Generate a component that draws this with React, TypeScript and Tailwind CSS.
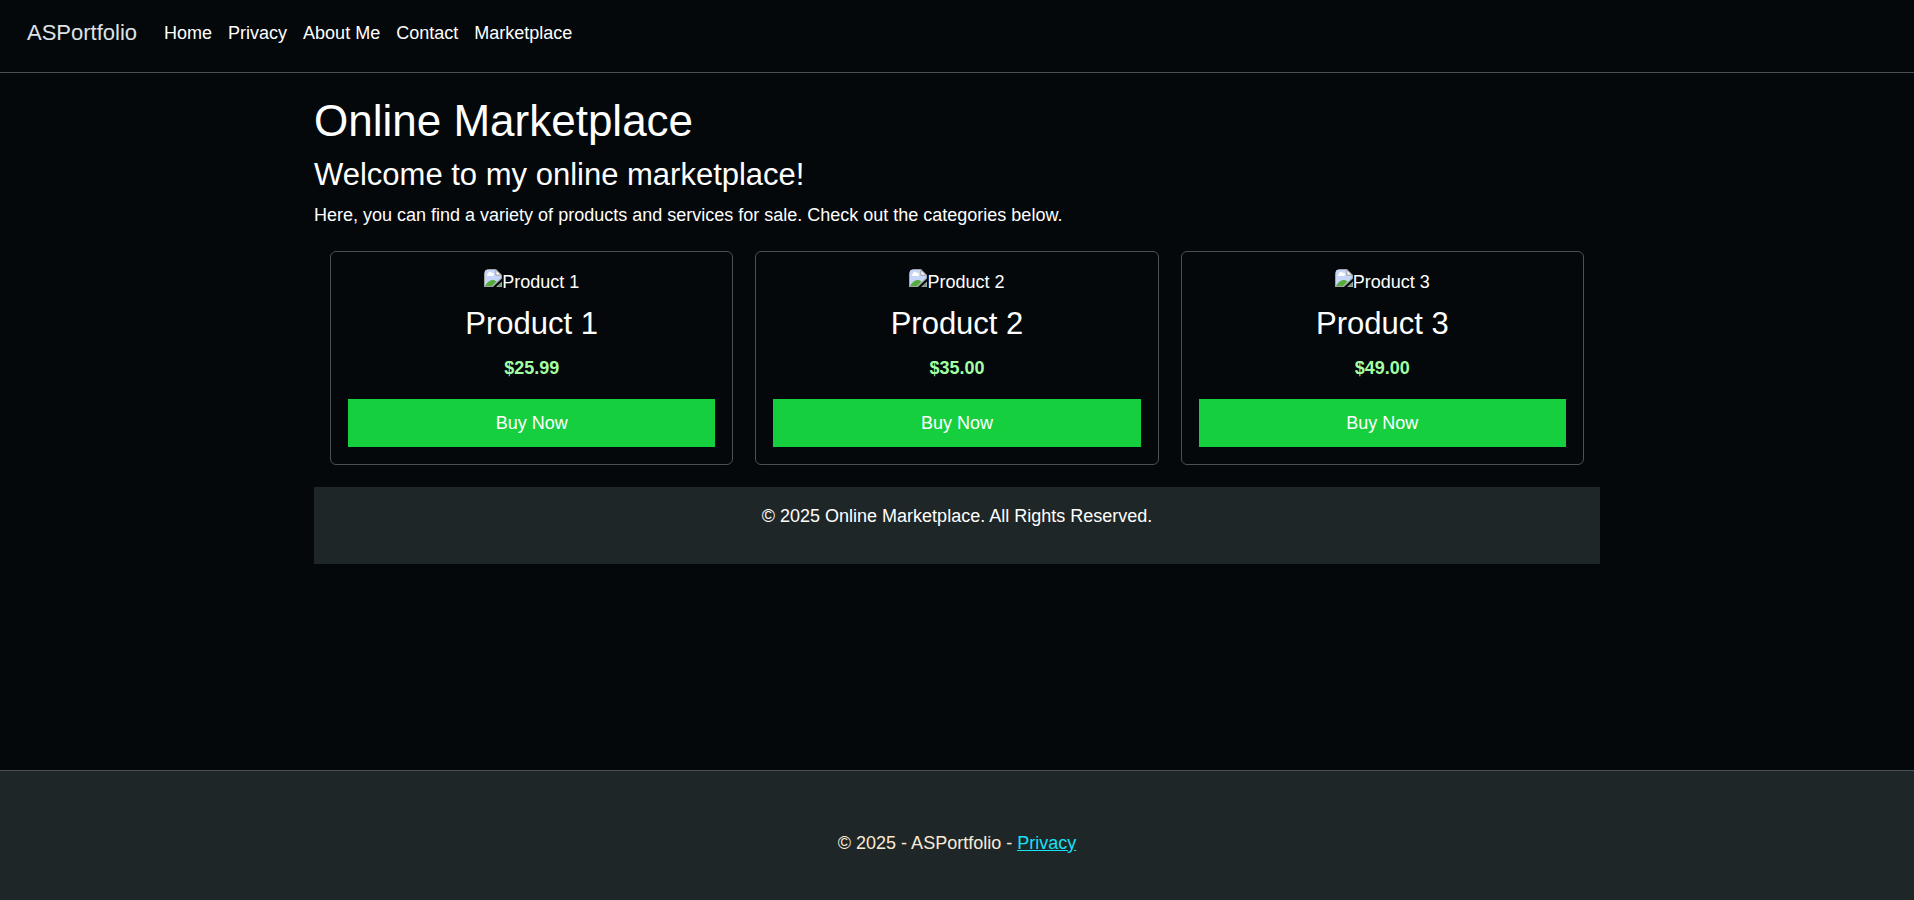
const links = ["Home", "Privacy", "About Me", "Contact", "Marketplace"];

const products = [
  { name: "Product 1", price: "$25.99" },
  { name: "Product 2", price: "$35.00" },
  { name: "Product 3", price: "$49.00" },
];

function MissingImage() {
  return (
    <svg width="18" height="18" viewBox="0 0 18 18" className="shrink-0 rounded-tl-[5px]" aria-hidden="true">
      <path d="M0 0h12l6 6v3.500L9 18H0z" fill="#a3a3a3" />
      <path d="M1 1h10.500v5.500H17V9l-9 8H1z" fill="#c5d6f8" />
      <path d="M3.500 7a1.500 1.500 0 0 1 .5-2.500 2 2 0 0 1 3.800-.5A1.600 1.600 0 0 1 9 7z" fill="#fff" />
      <path d="M1 17c2-3.500 4.500-6 7.500-6 1.800 0 3 .6 4 1.600L8 17z" fill="#55ab3c" />
      <path d="M12 1.200V6h4.800z" fill="#fff" stroke="#a3a3a3" strokeWidth=".8" />
      <path d="M18 12.500V18h-6z" fill="#a3a3a3" />
      <path d="M17 14.500V17h-2.800z" fill="#55ab3c" />
    </svg>
  );
}

export default function App() {
  return (
    <div className="flex min-h-screen flex-col bg-[#04080b] font-['Liberation_Sans',Arial,sans-serif] text-lg leading-[27px] text-white">
      <header className="border-b border-[#495057]">
        <nav className="flex flex-wrap items-center gap-x-[27px] px-[27px] pt-[9px] pb-[15px]">
          <a href="#home" className="py-[7px] text-[22px] leading-[34px] text-[#dee2e6]">ASPortfolio</a>
          <ul className="flex flex-wrap gap-x-4">
            {links.map((link) => (
              <li key={link}>
                <a href={"#" + link.toLowerCase().replace(" ", "-")}>{link}</a>
              </li>
            ))}
          </ul>
        </nav>
      </header>

      <main className="mx-auto w-full max-w-[1320px] grow px-[17px] pt-[21px]">
        <h1 className="mb-[9px] text-[44px] leading-[54px]">Online Marketplace</h1>
        <h2 className="mb-[9px] text-[31px] leading-9">Welcome to my online marketplace!</h2>
        <p>Here, you can find a variety of products and services for sale. Check out the categories below.</p>

        <div className="grid gap-[22px] px-4 py-[22px] md:grid-cols-3">
          {products.map((product) => (
            <article key={product.name} className="rounded-[6px] border border-[#495057] p-[17px] text-center">
              <div className="flex justify-center">
                <MissingImage />
                <span>{product.name}</span>
              </div>
              <h3 className="mt-[9px] mb-3 text-[31px] leading-[38px]">{product.name}</h3>
              <p className="mb-[17px] font-bold text-[#a3ffa3]">{product.price}</p>
              <button type="button" className="block h-12 w-full bg-[#16cf3e]">Buy Now</button>
            </article>
          ))}
        </div>

        <footer className="bg-[#1f2628] px-4 pt-4 pb-[34px] text-center">
          <p>© 2025 Online Marketplace. All Rights Reserved.</p>
        </footer>
      </main>

      <footer className="border-t border-[#495057] bg-[#1f2628] px-4 pt-[59px] pb-[43px] text-center text-[#faebd7]">
        © 2025 - ASPortfolio - <a href="#privacy" className="text-[#17e1f5] underline">Privacy</a>
      </footer>
    </div>
  );
}
